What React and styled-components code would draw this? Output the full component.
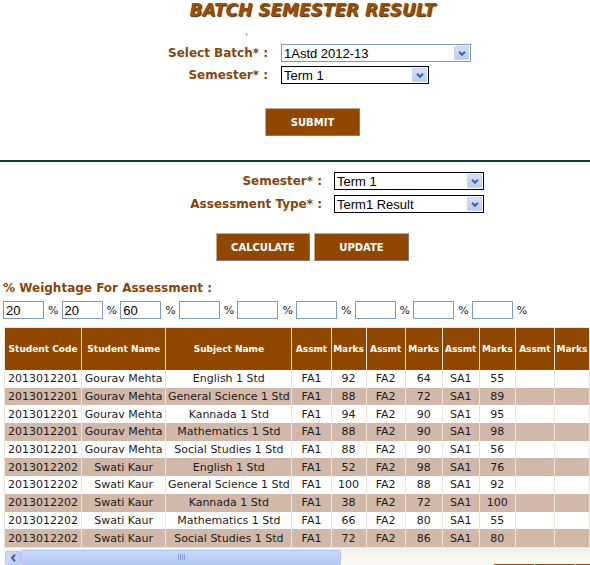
import React from 'react'
import styled, { createGlobalStyle } from 'styled-components'

const GlobalStyle = createGlobalStyle`
  body {
    margin: 0;
    background: #fff;
    overflow: hidden;
    font-family: "DejaVu Sans", Verdana, sans-serif;
  }
`

const Page = styled.div`
  width: 640px;
`

const Title = styled.h1`
  margin: 0;
  width: 625px;
  text-align: center;
  font: italic bold 17px/20px "DejaVu Sans", Verdana, sans-serif;
  color: #94500f;
  text-shadow: 1px 1px 1px #4a2a08;
`

const DotLine = styled.div`
  height: 24px;
  padding-left: 245px;
  font-size: 10px;
  line-height: 24px;
  color: #333;
`

const FormGrid = styled.div`
  display: grid;
  grid-template-columns: ${p => p.$labelW}px auto;
  column-gap: ${p => p.$gap}px;
  row-gap: ${p => p.$rowGap}px;
  margin: ${p => p.$top}px 0 0 ${p => p.$left}px;
  align-items: center;
`

const Label = styled.label`
  text-align: right;
  font: bold 12px/18px "DejaVu Sans", Verdana, sans-serif;
  color: #84460d;
  white-space: nowrap;
`

const SelectBox = styled.div`
  box-sizing: border-box;
  width: ${p => p.$w}px;
  height: 18px;
  border: 1px solid ${p => (p.$focus ? '#000' : '#7f9db9')};
  display: flex;
  align-items: center;
  justify-content: space-between;
  background: #fff;
  font: 13px "Liberation Sans", Arial, sans-serif;
  color: #000;
  padding-left: 2px;
`

const ArrowBtn = styled.span`
  box-sizing: border-box;
  width: 15px;
  height: 14px;
  margin-right: 1px;
  display: flex;
  align-items: center;
  justify-content: center;
  border: 1px solid #c3d3fd;
  border-radius: 1px;
  background: linear-gradient(#d6e1fb, #b7c9f5);
`

function Select({ w, focus, value }) {
  return (
    <SelectBox $w={w} $focus={focus}>
      <span>{value}</span>
      <ArrowBtn>
        <svg width="8" height="5" viewBox="0 0 8 5">
          <polyline points="1,0.8 4,3.8 7,0.8" fill="none" stroke="#4d6185" strokeWidth="2" />
        </svg>
      </ArrowBtn>
    </SelectBox>
  )
}

const ButtonRow = styled.div`
  display: flex;
  gap: 4px;
  margin: ${p => p.$top}px 0 0 ${p => p.$left}px;
`

const Button = styled.button`
  box-sizing: border-box;
  width: ${p => p.$w}px;
  height: 28px;
  padding: 0;
  background: #904800;
  color: #fff;
  font: bold 10px "DejaVu Sans", Verdana, sans-serif;
  border: 1px solid;
  border-color: #c9a98a #7d7d7d #7d7d7d #c9a98a;
`

const Rule = styled.hr`
  margin: 24px 0 0;
  width: 590px;
  height: 2px;
  border: 0;
  background: #123d3d;
`

const SectionLabel = styled.div`
  margin: 19px 0 0 3px;
  font: bold 12px/16px "DejaVu Sans", Verdana, sans-serif;
  color: #84460d;
`

const WeightRow = styled.div`
  display: flex;
  align-items: center;
  margin: 5px 0 0 3px;
`

const WeightInput = styled.input`
  box-sizing: border-box;
  width: 41px;
  height: 18px;
  border: 1px solid #7f9db9;
  padding: 0 2px;
  font: 13px "Liberation Sans", Arial, sans-serif;
  color: #000;
  outline: none;
`

const Pct = styled.span`
  width: 10px;
  padding: 0 ${p => (p.$last ? 0 : 3.6)}px 0 4px;
  font: 11px "DejaVu Sans", Verdana, sans-serif;
  color: #222;
`

const Table = styled.table`
  margin: 8px 0 0 4px;
  width: 586px;
  table-layout: fixed;
  border-collapse: collapse;
  border: 1px solid #ece5d6;
`

const Th = styled.th`
  height: 42px;
  padding: 0;
  background: #904800;
  color: #fff;
  font: bold 9px "DejaVu Sans", Verdana, sans-serif;
  border-left: 1px solid #efe6d4;
  white-space: nowrap;
`

const Tr = styled.tr`
  background: ${p => (p.$alt ? '#d0b8aa' : '#fff')};
`

const Td = styled.td`
  height: 17.7px;
  padding: 0;
  text-align: center;
  white-space: nowrap;
  font: 11px "DejaVu Sans", Verdana, sans-serif;
  color: #1c1c1c;
  border-left: 1px solid #ece5d6;
`

const ScrollBar = styled.div`
  display: flex;
  width: 640px;
  height: 16px;
  margin: 1px 0 0 4px;
  background: linear-gradient(#f3f1e8, #fdfdfb);
  border-top: 1px solid #eeeeee;
`

const ScrollArrow = styled.div`
  box-sizing: border-box;
  width: 16px;
  height: 14px;
  margin: 1px 0 0 1px;
  display: flex;
  align-items: center;
  justify-content: center;
  border: 1px solid #b4c8f6;
  border-radius: 2px;
  background: linear-gradient(90deg, #cfdcfb, #b9cbf6);
`

const Thumb = styled.div`
  box-sizing: border-box;
  width: 320px;
  height: 15px;
  display: flex;
  align-items: center;
  justify-content: center;
  border: 1px solid #b0c4f2;
  border-radius: 2px;
  background: linear-gradient(#c9d8fc, #b6c9f6);
`

const Grip = styled.span`
  width: 7px;
  height: 6px;
  background: repeating-linear-gradient(90deg, #8ba2dc 0 1px, transparent 1px 2px);
`

const BottomButtons = styled.div`
  display: flex;
  gap: 1px;
  margin: -2px 0 0 494px;
`

const BottomBtn = styled.div`
  width: 40px;
  height: 20px;
  background: #904800;
`

const cols = [77, 84, 126, 39, 35, 39, 37, 37, 36, 39, 35]
const heads = ['Student Code', 'Student Name', 'Subject Name', 'Assmt', 'Marks', 'Assmt', 'Marks', 'Assmt', 'Marks', 'Assmt', 'Marks']

const rows = [
  ['2013012201', 'Gourav Mehta', 'English 1 Std', 92, 64, 55],
  ['2013012201', 'Gourav Mehta', 'General Science 1 Std', 88, 72, 89],
  ['2013012201', 'Gourav Mehta', 'Kannada 1 Std', 94, 90, 95],
  ['2013012201', 'Gourav Mehta', 'Mathematics 1 Std', 88, 90, 98],
  ['2013012201', 'Gourav Mehta', 'Social Studies 1 Std', 88, 90, 56],
  ['2013012202', 'Swati Kaur', 'English 1 Std', 52, 98, 76],
  ['2013012202', 'Swati Kaur', 'General Science 1 Std', 100, 88, 92],
  ['2013012202', 'Swati Kaur', 'Kannada 1 Std', 38, 72, 100],
  ['2013012202', 'Swati Kaur', 'Mathematics 1 Std', 66, 80, 55],
  ['2013012202', 'Swati Kaur', 'Social Studies 1 Std', 72, 86, 80],
]

const weights = ['20', '20', '60', '', '', '', '', '', '']

export default function App() {
  return (
    <Page>
      <GlobalStyle />
      <Title>BATCH SEMESTER RESULT</Title>
      <DotLine>.</DotLine>

      <FormGrid $labelW={120} $gap={13} $rowGap={4} $top={0} $left={148}>
        <Label>Select Batch* :</Label>
        <Select w={190} value="1Astd 2012-13" />
        <Label>Semester* :</Label>
        <Select w={148} focus value="Term 1" />
      </FormGrid>

      <ButtonRow $top={24} $left={265}>
        <Button $w={95}>SUBMIT</Button>
      </ButtonRow>

      <Rule />

      <FormGrid $labelW={140} $gap={12} $rowGap={5} $top={10} $left={182}>
        <Label>Semester* :</Label>
        <Select w={150} focus value="Term 1" />
        <Label>Assessment Type* :</Label>
        <Select w={150} focus value="Term1 Result" />
      </FormGrid>

      <ButtonRow $top={20} $left={216}>
        <Button $w={94}>CALCULATE</Button>
        <Button $w={95}>UPDATE</Button>
      </ButtonRow>

      <SectionLabel>% Weightage For Assessment :</SectionLabel>
      <WeightRow>
        {weights.map((v, i) => (
          <React.Fragment key={i}>
            <WeightInput defaultValue={v} />
            <Pct $last={i === weights.length - 1}>%</Pct>
          </React.Fragment>
        ))}
      </WeightRow>

      <Table>
        <colgroup>
          {cols.map((w, i) => <col key={i} style={{ width: w }} />)}
        </colgroup>
        <thead>
          <tr>
            {heads.map((h, i) => <Th key={i}>{h}</Th>)}
          </tr>
        </thead>
        <tbody>
          {rows.map((r, i) => (
            <Tr key={i} $alt={i % 2 === 1}>
              <Td>{r[0]}</Td>
              <Td>{r[1]}</Td>
              <Td>{r[2]}</Td>
              <Td>FA1</Td>
              <Td>{r[3]}</Td>
              <Td>FA2</Td>
              <Td>{r[4]}</Td>
              <Td>SA1</Td>
              <Td>{r[5]}</Td>
              <Td />
              <Td />
            </Tr>
          ))}
        </tbody>
      </Table>

      <ScrollBar>
        <ScrollArrow>
          <svg width="5" height="8" viewBox="0 0 5 8">
            <polyline points="4,0.8 1,4 4,7.2" fill="none" stroke="#4d6185" strokeWidth="2" />
          </svg>
        </ScrollArrow>
        <Thumb>
          <Grip />
        </Thumb>
      </ScrollBar>

      <BottomButtons>
        <BottomBtn />
        <BottomBtn />
        <BottomBtn />
      </BottomButtons>
    </Page>
  )
}
